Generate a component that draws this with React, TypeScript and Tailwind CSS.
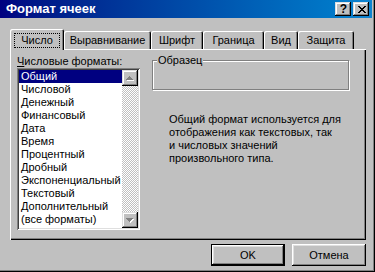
import React from 'react';

// Win98-ish bevels
const raised =
  'shadow-[inset_-1px_-1px_#000,inset_1px_1px_#dfdfdf,inset_-2px_-2px_#808080,inset_2px_2px_#fff]';
const button =
  'shadow-[inset_-1px_-1px_#000,inset_1px_1px_#fff,inset_-2px_-2px_#808080,inset_2px_2px_#dfdfdf]';

const formats = [
  'Общий',
  'Числовой',
  'Денежный',
  'Финансовый',
  'Дата',
  'Время',
  'Процентный',
  'Дробный',
  'Экспоненциальный',
  'Текстовый',
  'Дополнительный',
  '(все форматы)',
];

const tabs = [
  { label: 'Выравнивание', w: 'w-[87px]' },
  { label: 'Шрифт', w: 'w-[52px]' },
  { label: 'Граница', w: 'w-[61px]' },
  { label: 'Вид', w: 'w-[34px]' },
  { label: 'Защита', w: 'w-[56px]' },
];

function CloseGlyph() {
  const px = [
    [0, 0], [1, 0], [6, 0], [7, 0],
    [1, 1], [2, 1], [5, 1], [6, 1],
    [2, 2], [3, 2], [4, 2], [5, 2],
    [3, 3], [4, 3],
    [2, 4], [3, 4], [4, 4], [5, 4],
    [1, 5], [2, 5], [5, 5], [6, 5],
    [0, 6], [1, 6], [6, 6], [7, 6],
  ];
  return (
    <svg width="8" height="7" viewBox="0 0 8 7" shapeRendering="crispEdges">
      {px.map(([x, y]) => (
        <rect key={`${x}-${y}`} x={x} y={y} width="1" height="1" fill="#000" />
      ))}
    </svg>
  );
}

// disabled scroll arrow: gray triangle with a white shadow
function Arrow({ down }: { down?: boolean }) {
  const rows = down ? [[0, 7], [1, 5], [2, 3], [3, 1]] : [[3, 1], [2, 3], [1, 5], [0, 7]];
  return (
    <svg width="8" height="5" viewBox="0 0 8 5" shapeRendering="crispEdges">
      {rows.map(([x, w], y) => (
        <rect key={`w${y}`} x={x + 1} y={y + 1} width={w} height="1" fill="#fff" />
      ))}
      {rows.map(([x, w], y) => (
        <rect key={`g${y}`} x={x} y={y} width={w} height="1" fill="#808080" />
      ))}
    </svg>
  );
}

export default function App() {
  return (
    <div className="w-[375px] h-[272px] overflow-hidden bg-[#c0c0c0] text-[11px] text-black font-['Liberation_Sans',Arial,sans-serif] shadow-[inset_-1px_-1px_#000,inset_-2px_-2px_#808080] flex flex-col">
      {/* Title bar */}
      <div className="h-[18px] mr-[3px] flex items-center bg-linear-to-r from-[#000080] to-[#1084d0]">
        <span className="pl-[6px] flex-1 text-white font-bold text-[13px] leading-[18px]">Формат ячеек</span>
        <div className="flex gap-[2px] mr-[3px]">
          <div className={`w-[16px] h-[14px] bg-[#c0c0c0] flex items-center justify-center ${raised}`}>
            <span className="font-bold text-[12px] leading-[12px] pl-px">?</span>
          </div>
          <div className={`w-[16px] h-[14px] bg-[#c0c0c0] flex items-center justify-center pl-px ${raised}`}>
            <CloseGlyph />
          </div>
        </div>
      </div>

      <div className="ml-[10px] w-[356px] mt-[11px] flex flex-col">
        {/* Tabs */}
        <div className="flex items-end h-[20px]">
          <div className="relative z-10 -mb-px h-[21px] w-[54px] bg-[#c0c0c0] rounded-tl-[2px] rounded-tr-[2px] shadow-[inset_1px_1px_#fff,inset_-1px_0_#000,inset_-2px_0_#808080] flex justify-center pt-[4px]">
            <span className="h-[15px] leading-[13px] px-[6px] border border-dotted border-black">Число</span>
          </div>
          {tabs.map((t) => (
            <div
              key={t.label}
              className={`h-[18px] ${t.w} bg-[#c0c0c0] rounded-tl-[2px] rounded-tr-[2px] shadow-[inset_1px_1px_#fff,inset_-1px_0_#000,inset_-2px_0_#808080] flex items-center justify-center leading-[13px]`}
            >
              {t.label}
            </div>
          ))}
        </div>

        {/* Panel */}
        <div className="h-[191px] bg-[#c0c0c0] shadow-[inset_1px_1px_#fff,inset_-1px_-1px_#000,inset_-2px_-2px_#808080] flex pt-[6px] pl-[7px]">
          <div className="flex flex-col">
            <div className="h-[13px] leading-[13px]">
              <span className="underline">Ч</span>исловые форматы:
            </div>
            <div className="w-[123px] h-[162px] bg-white p-[2px] flex shadow-[inset_1px_1px_#808080,inset_-1px_-1px_#fff,inset_2px_2px_#404040,inset_-2px_-2px_#dfdfdf]">
              <div className="flex-1 flex flex-col">
                {formats.map((f, i) => (
                  <div
                    key={f}
                    className={`h-[13px] leading-[13px] pl-[2px] whitespace-nowrap ${
                      i === 0 ? 'bg-[#000080] text-white' : ''
                    }`}
                  >
                    {f}
                  </div>
                ))}
              </div>
              <div className="w-[16px] flex flex-col">
                <div className={`h-[16px] bg-[#c0c0c0] flex items-center justify-center ${raised}`}>
                  <Arrow />
                </div>
                <div className="flex-1 bg-[image:repeating-conic-gradient(#c0c0c0_0%_25%,#fff_0%_50%)] bg-[length:2px_2px]" />
                <div className={`h-[16px] bg-[#c0c0c0] flex items-center justify-center ${raised}`}>
                  <Arrow down />
                </div>
              </div>
            </div>
          </div>

          <div className="ml-[12px] flex flex-col">
            <div className="relative mt-[5px] w-[197px] h-[30px] border border-[#808080] shadow-[inset_1px_1px_#fff,1px_1px_#fff]">
              <span className="absolute left-[4px] top-[-7px] px-px bg-[#c0c0c0] leading-[13px]">Образец</span>
            </div>
            <p className="mt-[23px] pl-[17px] leading-[13px] whitespace-nowrap">
              Общий формат используется для
              <br />
              отображения как текстовых, так
              <br />
              и числовых значений
              <br />
              произвольного типа.
            </p>
          </div>
        </div>

        {/* Buttons */}
        <div className="flex justify-end gap-[7px] mt-[4px]">
          <button className={`w-[74px] h-[22px] bg-[#c0c0c0] border border-black ${button} leading-[13px]`}>OK</button>
          <button className={`w-[74px] h-[22px] bg-[#c0c0c0] ${button} leading-[13px]`}>Отмена</button>
        </div>
      </div>
    </div>
  );
}
